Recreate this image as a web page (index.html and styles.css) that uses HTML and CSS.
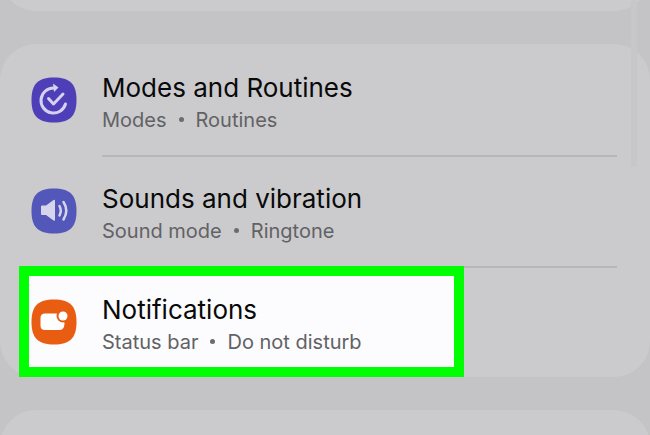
FILE: index.html
```html
<!DOCTYPE html>
<html lang="en">
<head>
  <meta charset="UTF-8">
  <meta name="viewport" content="width=device-width, initial-scale=1.0">
  <title>Settings</title>
  <link rel="stylesheet" href="styles.css">
</head>
<body>
  <main class="settings">
    <div class="card card-above"></div>

    <nav class="card">
      <a class="row" href="#modes">
        <svg class="icon" viewBox="0 0 46 46" aria-hidden="true">
          <path d="M23 0.500C39 0.500 45.500 7 45.500 23S39 45.500 23 45.500 0.500 39 0.500 23 7 0.500 23 0.500Z" fill="#4e3fb8"/>
          <g fill="none" stroke="#d6d2ee" stroke-width="3" stroke-linecap="round" stroke-linejoin="round">
            <path d="M22.500 11A12.500 12.500 0 1 0 34.500 27"/>
            <path d="M17.500 21.500L22.500 27L32 17"/>
          </g>
          <path d="M22 6.500L27.500 10.500L23 15Z" fill="#d6d2ee"/>
        </svg>
        <span class="text">
          <span class="title">Modes and Routines</span>
          <span class="sub"><span>Modes</span><i class="dot"></i><span>Routines</span></span>
        </span>
      </a>

      <a class="row" href="#sounds">
        <svg class="icon" viewBox="0 0 46 46" aria-hidden="true">
          <path d="M23 0.500C39 0.500 45.500 7 45.500 23S39 45.500 23 45.500 0.500 39 0.500 23 7 0.500 23 0.500Z" fill="#5357b9"/>
          <path d="M11 17.500H15L22.500 12Q24 11 24 13V31.500Q24 33.500 22.500 32.500L15 27H11Q10 27 10 26V18.500Q10 17.500 11 17.500Z" fill="#d6d5ec"/>
          <g fill="none" stroke="#d6d5ec" stroke-width="2.500" stroke-linecap="round">
            <path d="M28.500 18Q31 22.500 28.500 27.500"/>
            <path d="M32.500 14Q38 22.500 32.500 31.500"/>
          </g>
        </svg>
        <span class="text">
          <span class="title">Sounds and vibration</span>
          <span class="sub"><span>Sound mode</span><i class="dot"></i><span>Ringtone</span></span>
        </span>
      </a>

      <a class="row highlighted" href="#notifications">
        <svg class="icon" viewBox="0 0 46 46" aria-hidden="true">
          <path d="M23 0.500C39 0.500 45.500 7 45.500 23S39 45.500 23 45.500 0.500 39 0.500 23 7 0.500 23 0.500Z" fill="#e95d12"/>
          <path d="M14 14.500H32V20Q34 22 33.500 25Q33 31 28.500 31H14Q9.500 31 9.500 26.500V19Q9.500 14.500 14 14.500Z" fill="#fff"/>
          <circle cx="32" cy="17" r="6.500" fill="#e95d12"/>
          <circle cx="32" cy="17" r="4.500" fill="#fff"/>
        </svg>
        <span class="text">
          <span class="title">Notifications</span>
          <span class="sub"><span>Status bar</span><i class="dot"></i><span>Do not disturb</span></span>
        </span>
      </a>
    </nav>

    <div class="card card-below"></div>
    <div class="scrollbar"></div>
  </main>
</body>
</html>
```

FILE: styles.css
```css
* {
  margin: 0;
  padding: 0;
  box-sizing: border-box;
}

body {
  background-color: #c4c4c6;
  font-family: Inter, Roboto, sans-serif;
  color: #090909;
}

/* Page column, cut off at the bottom of the window */
.settings {
  position: relative;
  height: 100vh;
  display: flex;
  flex-direction: column;
  gap: 33px;
  overflow: hidden;
}

.card {
  background-color: #cbcbcd;
  border-radius: 36px;
  flex-shrink: 0;
}

/* Only the bottom edge is scrolled into view */
.card-above {
  height: 111px;
  margin-top: -100px;
}

.card-below {
  height: 111px;
}

/* Rows */
.row {
  position: relative;
  display: flex;
  align-items: center;
  gap: 25px;
  height: 111px;
  padding-left: 31px;
  color: inherit;
  text-decoration: none;
}

/* Divider starts at the text, not at the icon */
.row + .row::before {
  content: "";
  position: absolute;
  top: 0;
  left: 102px;
  right: 33px;
  height: 2px;
  background-color: #b7b7b9;
}

.icon {
  position: relative;
  width: 46px;
  height: 46px;
  flex-shrink: 0;
}

.text {
  position: relative;
  display: flex;
  flex-direction: column;
  padding-top: 4px;
}

.title {
  font-size: 26px;
  line-height: 36px;
}

.sub {
  display: flex;
  align-items: center;
  gap: 12px;
  font-size: 20px;
  line-height: 28px;
  color: #626264;
}

.dot {
  width: 5px;
  height: 5px;
  border-radius: 50%;
  background-color: #6c6c6e;
}

/* Green frame around the chosen row */
.highlighted::after {
  content: "";
  position: absolute;
  top: 0;
  bottom: 0;
  left: 19px;
  right: 186px;
  border: 10px solid #00ff00;
  background-color: #fcfcfe;
}

.highlighted .icon,
.highlighted .text {
  z-index: 1;
}

.scrollbar {
  position: absolute;
  top: 0;
  right: 13px;
  width: 6px;
  height: 167px;
  border-radius: 3px;
  background-color: #c7c7c9;
}
```
